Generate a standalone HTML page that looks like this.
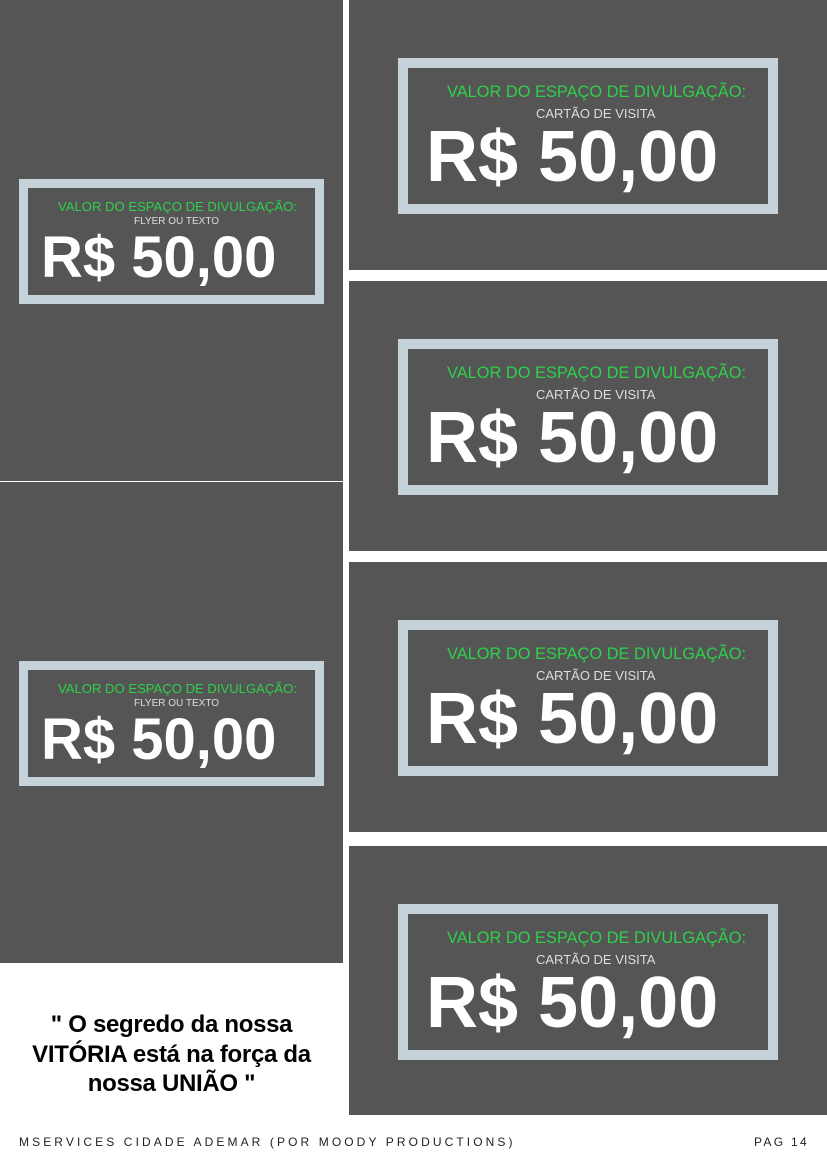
<!DOCTYPE html>
<html><head><meta charset="utf-8"><style>
body{margin:0;width:827px;height:1170px;background:#fff;position:relative;overflow:hidden;font-family:"Liberation Sans",sans-serif}
.p{position:absolute;background:#555555}
.b{position:absolute;border:10px solid #c5d2da;background:#555;box-sizing:border-box}
.g{position:absolute;color:#2ed04b;white-space:nowrap}
.s{position:absolute;color:#ddd;white-space:nowrap}
.v{position:absolute;color:#fff;font-weight:bold;white-space:nowrap}
.q{position:absolute;left:0;width:343px;text-align:center;font-weight:bold;font-size:24px;line-height:29.5px;top:1010px;color:#000;letter-spacing:-0.3px}
.f{position:absolute;top:1135px;font-size:12px;letter-spacing:3.1px;color:#222}
</style></head><body>
<div class="p" style="left:0;top:0;width:343px;height:481px"></div>
<div class="p" style="left:0;top:482px;width:343px;height:481px"></div>
<div class="p" style="left:349px;top:0;width:478px;height:270px"></div>
<div class="p" style="left:349px;top:281px;width:478px;height:270px"></div>
<div class="p" style="left:349px;top:562px;width:478px;height:270px"></div>
<div class="p" style="left:349px;top:846px;width:478px;height:269px"></div>

<div class="b" style="left:19px;top:179px;width:305px;height:125px;border-width:9px"></div>
<div class="g" style="left:58px;top:199px;font-size:13.1px">VALOR DO ESPAÇO DE DIVULGAÇÃO:</div>
<div class="s" style="left:134px;top:216px;font-size:10px">FLYER OU TEXTO</div>
<div class="v" style="left:41px;top:224px;font-size:58px">R$ 50,00</div>

<div class="b" style="left:19px;top:661px;width:305px;height:125px;border-width:9px"></div>
<div class="g" style="left:58px;top:681px;font-size:13.1px">VALOR DO ESPAÇO DE DIVULGAÇÃO:</div>
<div class="s" style="left:134px;top:698px;font-size:10px">FLYER OU TEXTO</div>
<div class="v" style="left:41px;top:706px;font-size:58px">R$ 50,00</div>

<div class="b" style="left:398px;top:58px;width:380px;height:156px"></div>
<div class="g" style="left:447px;top:83px;font-size:16.4px">VALOR DO ESPAÇO DE DIVULGAÇÃO:</div>
<div class="s" style="left:536px;top:106px;font-size:13px">CARTÃO DE VISITA</div>
<div class="v" style="left:426px;top:116px;font-size:72px">R$ 50,00</div>

<div class="b" style="left:398px;top:339px;width:380px;height:156px"></div>
<div class="g" style="left:447px;top:364px;font-size:16.4px">VALOR DO ESPAÇO DE DIVULGAÇÃO:</div>
<div class="s" style="left:536px;top:387px;font-size:13px">CARTÃO DE VISITA</div>
<div class="v" style="left:426px;top:397px;font-size:72px">R$ 50,00</div>

<div class="b" style="left:398px;top:620px;width:380px;height:156px"></div>
<div class="g" style="left:447px;top:645px;font-size:16.4px">VALOR DO ESPAÇO DE DIVULGAÇÃO:</div>
<div class="s" style="left:536px;top:668px;font-size:13px">CARTÃO DE VISITA</div>
<div class="v" style="left:426px;top:678px;font-size:72px">R$ 50,00</div>

<div class="b" style="left:398px;top:904px;width:380px;height:156px"></div>
<div class="g" style="left:447px;top:929px;font-size:16.4px">VALOR DO ESPAÇO DE DIVULGAÇÃO:</div>
<div class="s" style="left:536px;top:952px;font-size:13px">CARTÃO DE VISITA</div>
<div class="v" style="left:426px;top:962px;font-size:72px">R$ 50,00</div>

<div class="q">" O segredo da nossa<br>VITÓRIA está na força da<br>nossa UNIÃO "</div>
<div class="f" style="left:19px">MSERVICES CIDADE ADEMAR (POR MOODY PRODUCTIONS)</div>
<div class="f" style="left:754px;letter-spacing:2.3px">PAG 14</div>
</body></html>
